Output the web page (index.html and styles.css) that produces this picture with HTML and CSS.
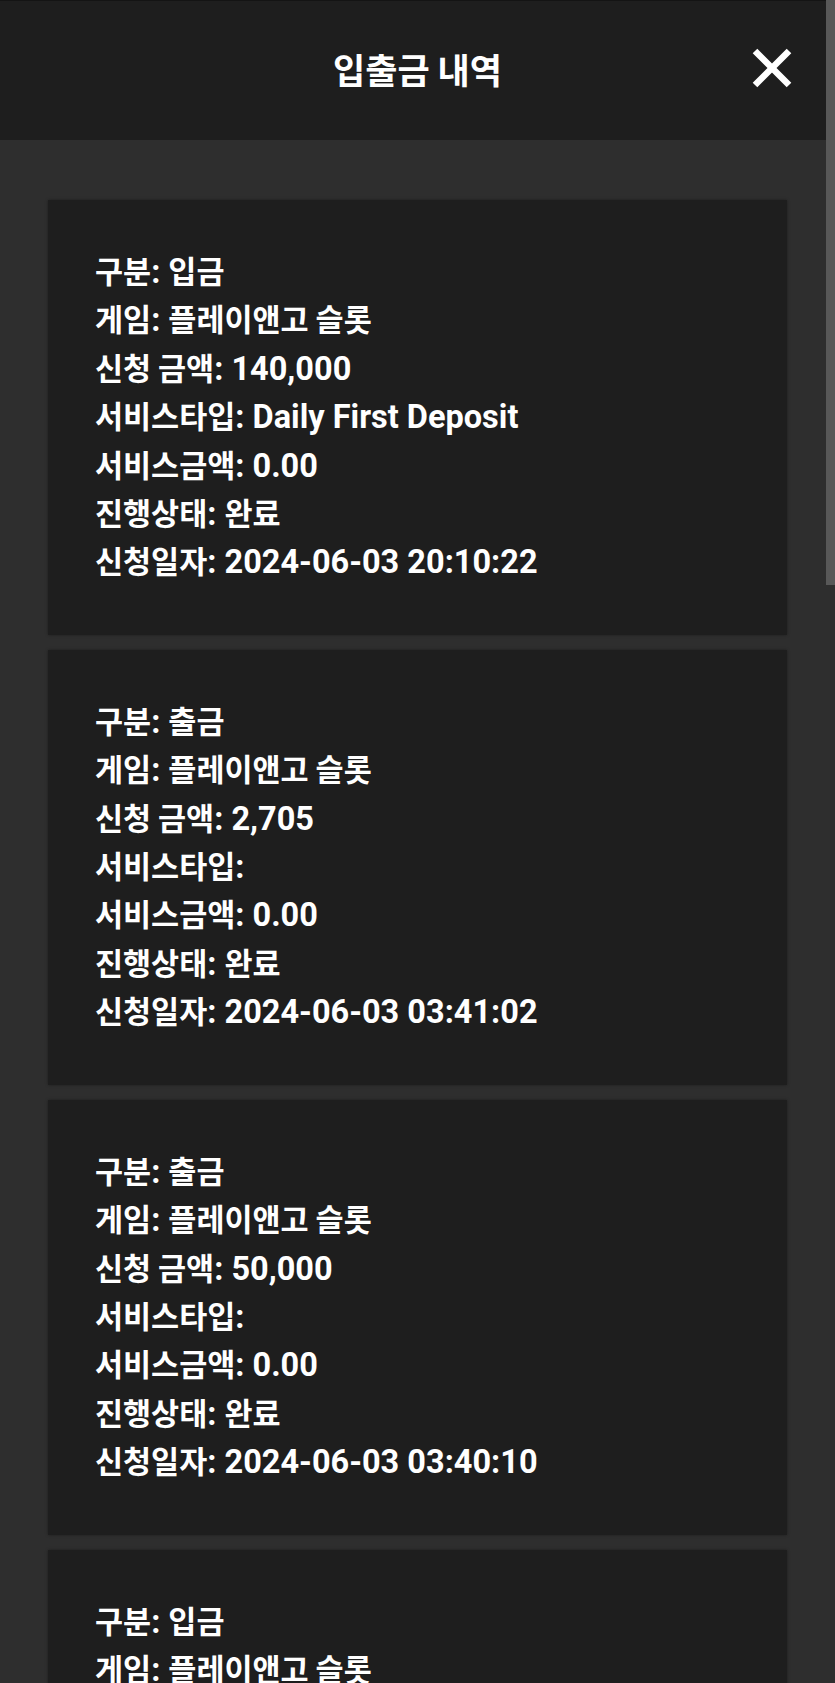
FILE: index.html
```html
<!doctype html>
<html>
 <head>
	<meta charset="UTF-8">
	<title>입출금 내역</title>
	<link rel="stylesheet" href="styles.css">
 </head>
 <body>
	<div class="top_bar">
		<h2 class="top_title">입출금 내역</h2>
		<a class="btn_close" href="#">
			<svg width="40" height="40" viewBox="0 0 40 40">
				<path d="M3 3 L37 37 M37 3 L3 37" stroke="#fff" stroke-width="6.5" fill="none"/>
			</svg>
		</a>
	</div>

	<div class="history_list">
		<div class="history_item">
			<p><span class="ko">구분</span>: <span class="ko">입금</span></p>
			<p><span class="ko">게임</span>: <span class="ko">플레이앤고 슬롯</span></p>
			<p><span class="ko">신청 금액</span>: 140,000</p>
			<p><span class="ko">서비스타입</span>: Daily First Deposit</p>
			<p><span class="ko">서비스금액</span>: 0.00</p>
			<p><span class="ko">진행상태</span>: <span class="ko">완료</span></p>
			<p><span class="ko">신청일자</span>: 2024-06-03 20:10:22</p>
		</div>
		<div class="history_item">
			<p><span class="ko">구분</span>: <span class="ko">출금</span></p>
			<p><span class="ko">게임</span>: <span class="ko">플레이앤고 슬롯</span></p>
			<p><span class="ko">신청 금액</span>: 2,705</p>
			<p><span class="ko">서비스타입</span>: </p>
			<p><span class="ko">서비스금액</span>: 0.00</p>
			<p><span class="ko">진행상태</span>: <span class="ko">완료</span></p>
			<p><span class="ko">신청일자</span>: 2024-06-03 03:41:02</p>
		</div>
		<div class="history_item">
			<p><span class="ko">구분</span>: <span class="ko">출금</span></p>
			<p><span class="ko">게임</span>: <span class="ko">플레이앤고 슬롯</span></p>
			<p><span class="ko">신청 금액</span>: 50,000</p>
			<p><span class="ko">서비스타입</span>: </p>
			<p><span class="ko">서비스금액</span>: 0.00</p>
			<p><span class="ko">진행상태</span>: <span class="ko">완료</span></p>
			<p><span class="ko">신청일자</span>: 2024-06-03 03:40:10</p>
		</div>
		<div class="history_item">
			<p><span class="ko">구분</span>: <span class="ko">입금</span></p>
			<p><span class="ko">게임</span>: <span class="ko">플레이앤고 슬롯</span></p>
		</div>
	</div>

	<div class="scroll_thumb"></div>
 </body>
</html>
```

FILE: styles.css
```css
html{overflow:hidden}
body{
	margin:0;
	background:#2e2e2e;
	color:#fff;
	font-family:Roboto,"Noto Sans CJK KR",sans-serif;
	font-weight:bold;
}

/* 상단 타이틀 바 */
.top_bar{
	height:139px;
	border-top:1px solid #141414;
	background:#1e1e1e;
	display:flex;
	align-items:center;
	justify-content:center;
	position:relative;
}
.top_title{
	margin:0 0 5px;
	font-size:35px;
	font-weight:bold;
	font-family:"Noto Sans CJK KR",sans-serif;
}
.btn_close{
	position:absolute;
	right:43px;
	top:47px;
	width:40px;height:40px;
	display:block;
}

/* 입출금 목록 */
.history_list{
	padding:60px 48px 0;
	display:flex;
	flex-direction:column;
	gap:15px;
}
.history_item{
	background:#1e1e1e;
	padding:48px 47px;
	box-shadow:0 0 3px rgba(0,0,0,.35);
}
.history_item p{
	margin:0;
	font-size:32.5px;
	line-height:48.4px;
	white-space:pre;
}
/* 한글은 조금 작게 */
.ko{
	font-family:"Noto Sans CJK KR",sans-serif;
	font-size:30.5px;
	line-height:1;
}

/* 스크롤바 (오버레이) */
.scroll_thumb{
	position:fixed;
	right:0;top:0;
	width:9px;height:585px;
	background:#585858;
}
```
